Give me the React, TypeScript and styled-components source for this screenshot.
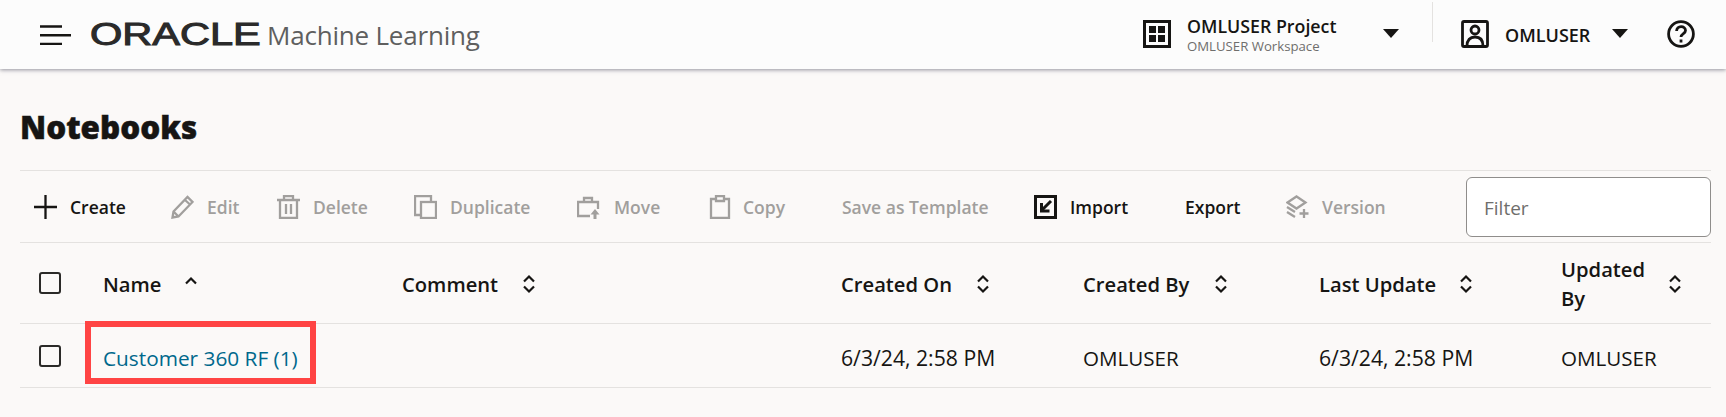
import React from 'react';
import styled, { createGlobalStyle } from 'styled-components';

const Global = createGlobalStyle`
  html, body { margin: 0; padding: 0; background: #fbf9f8; }
  body { font-family: "Open Sans", "Noto Sans", sans-serif; color: #161513; overflow: hidden; }
`;
const Page = styled.div`width: 1726px; height: 417px; display: flex; flex-direction: column;`;
const Header = styled.header`
  height: 69px; flex: none; display: flex; align-items: center; background: #fcfcfc;
  box-shadow: 0 1px 4px rgba(60, 60, 80, 0.55); padding: 0 31px 0 40px; box-sizing: border-box;
`;
const Burger = styled.svg`width: 31px; height: 20px; flex: none; margin-right: 19px;`;
const LogoBox = styled.div`width: 170px; height: 24px; flex: none; display: flex; align-items: center; margin-right: 7px; overflow: visible;`;
const LogoWord = styled.span`
  display: inline-block; font-family: "Liberation Sans", sans-serif; font-weight: 400; font-size: 31px; line-height: 24px;
  color: #2a2a2a; transform: scaleX(1.34); transform-origin: left center; -webkit-text-stroke: 1px #2a2a2a;
`;
const Product = styled.span`font-size: 26px; color: #5f5f5f; line-height: 34px; letter-spacing: -0.2px; white-space: nowrap;`;
const RightGroup = styled.div`margin-left: auto; display: flex; align-items: center; padding-bottom: 2px;`;
const Stack = styled.div`display: flex; flex-direction: column; margin: 3px 0 0 16px; width: 196px;`;
const ProjectTitle = styled.span`font-size: 17.8px; font-weight: 600; line-height: 22px; white-space: nowrap;`;
const ProjectSub = styled.span`font-size: 13.2px; color: #6f6e6c; line-height: 18px; white-space: nowrap;`;
const Divider = styled.div`width: 1px; height: 40px; background: #e4e2e0; margin: -24px 28px 0 33px;`;
const UserName = styled.span`font-size: 18px; font-weight: 600; margin: 2px 22px 0 16px; width: 85px; white-space: nowrap;`;
const Main = styled.main`padding: 40px 15px 0 20px; display: flex; flex-direction: column;`;
const Title = styled.h1`
  margin: 0 0 26px 0; font-size: 31.4px; font-weight: 800; line-height: 35px; color: #161513;
  -webkit-text-stroke: 0.5px #161513;
`;
const Toolbar = styled.div`
  height: 73px; display: flex; align-items: center; padding-left: 14px; box-sizing: border-box;
  border-top: 1px solid #e4e2e0; border-bottom: 1px solid #e4e2e0; position: relative;
`;
const ToolButton = styled.div<{ $w: number; $off?: boolean; $gap?: number }>`
  width: ${p => p.$w}px; flex: none; display: flex; align-items: center; gap: ${p => p.$gap ?? 13}px;
  color: ${p => (p.$off ? '#a19f9d' : '#161513')}; font-size: 17.5px; font-weight: 600; white-space: nowrap;
  svg { flex: none; }
`;
const Filter = styled.div`
  margin-left: auto; width: 245px; height: 60px; box-sizing: border-box; background: #fff;
  border: 1px solid #8f8d8b; border-radius: 6px; display: flex; align-items: center; padding: 2px 17px 0;
  font-size: 19px; color: #6f6e6c;
`;
const Row = styled.div<{ $h: number }>`
  height: ${p => p.$h}px; box-sizing: border-box; border-bottom: 1px solid #e4e2e0;
  display: grid; grid-template-columns: 83px 299px 439px 242px 236px 242px 150px; align-items: center;
`;
const CheckCell = styled.div`padding-left: 19px;`;
const Check = styled.div`width: 22px; height: 22px; box-sizing: border-box; border: 2px solid #2b2a28; border-radius: 3px;`;
const Head = styled.div`display: flex; align-items: center; font-size: 20.2px; font-weight: 600; line-height: 29px; padding-top: 2px;`;
const HeadLabel = styled.span<{ $w: number }>`width: ${p => p.$w}px; flex: none;`;
const Cell = styled.div<{ $date?: boolean }>`
  font-size: ${p => (p.$date ? 21.2 : 20.6)}px; line-height: 28px; padding-top: 4px; white-space: nowrap;
`;
const LinkCell = styled.div`position: relative; font-size: 20.8px; color: #00688c; line-height: 28px; padding-top: 4px; white-space: nowrap;`;
const Highlight = styled.div`
  position: absolute; left: -18px; top: -19px; width: 231px; height: 63px; box-sizing: border-box;
  border: 6px solid #ff4444; pointer-events: none;
`;

const SortBoth = () => (
  <svg width="14" height="20" viewBox="0 0 14 20" fill="none" stroke="#161513" strokeWidth="2.2">
    <path d="M2 7.5 7 2.5l5 5M2 12.5l5 5 5-5" />
  </svg>
);
const SortUp = () => (
  <svg width="14" height="20" viewBox="0 0 14 20" fill="none" stroke="#161513" strokeWidth="2.2">
    <path d="M2 9.5 7 4.5l5 5" />
  </svg>
);
const Caret = () => (
  <svg width="16" height="9" viewBox="0 0 16 9" fill="#161513"><path d="M0 0h16L8 9z" /></svg>
);
const ToolIcon: React.FC<{ children: React.ReactNode; off?: boolean }> = ({ children, off }) => (
  <svg width="23" height="24" viewBox="0 0 23 24" fill="none" stroke={off ? '#a19f9d' : '#161513'} strokeWidth="2.3">{children}</svg>
);

const HEADS: [string, number][] = [
  ['Comment', 120], ['Created On', 135], ['Created By', 131], ['Last Update', 140],
];

export default function App() {
  return (
    <Page>
      <Global />
      <Header>
        <Burger viewBox="0 0 31 20" fill="none" stroke="#161513" strokeWidth="2.4">
          <path d="M0 1.5h22M0 10.200h31M0 19h22" />
        </Burger>
        <LogoBox><LogoWord>ORACLE</LogoWord></LogoBox>
        <Product>Machine Learning</Product>
        <RightGroup>
          <svg width="28" height="28" viewBox="0 0 28 28" fill="none">
            <rect x="1.5" y="1.5" width="25" height="25" stroke="#161513" strokeWidth="3" />
            <path fill="#161513" d="M6 6h7v7H6zM15 6h7v7h-7zM6 15h7v7H6zM15 15h7v7h-7z" />
          </svg>
          <Stack>
            <ProjectTitle>OMLUSER Project</ProjectTitle>
            <ProjectSub>OMLUSER Workspace</ProjectSub>
          </Stack>
          <Caret />
          <Divider />
          <svg width="28" height="28" viewBox="0 0 28 28" fill="none" stroke="#161513" strokeWidth="2.8">
            <rect x="1.5" y="1.5" width="25" height="25" rx="1.5" />
            <circle cx="14" cy="10" r="4" />
            <path d="M6 26c0-6 3-9 8-9s8 3 8 9" />
          </svg>
          <UserName>OMLUSER</UserName>
          <Caret />
          <svg style={{ marginLeft: 39 }} width="28" height="28" viewBox="0 0 28 28" fill="none" stroke="#161513" strokeWidth="2.8">
            <circle cx="14" cy="14" r="12.4" />
            <path d="M9.600 11c0-2.700 2-4.400 4.500-4.400s4.400 1.600 4.400 3.900c0 3.400-4.500 3.500-4.500 6.500" />
            <path d="M14 19.500v3" />
          </svg>
        </RightGroup>
      </Header>
      <Main>
        <Title>Notebooks</Title>
        <Toolbar>
          <ToolButton $w={137}>
            <ToolIcon><path d="M11.500 0v24M0 12h23" /></ToolIcon>Create
          </ToolButton>
          <ToolButton $w={106} $off>
            <ToolIcon off><path d="M1.500 22.500l1-6L16.500 2l5 5-14 14.500zM2.500 16.500l5 5M14 5l5 4.500" /></ToolIcon>Edit
          </ToolButton>
          <ToolButton $w={137} $off>
            <ToolIcon off><path d="M0 5h23M7 5V1h9v4M3 5v18h17V5M9 9v10M14 9v10" /></ToolIcon>Delete
          </ToolButton>
          <ToolButton $w={163} $off>
            <ToolIcon off><path d="M6 20H1V1h16v5" /><rect x="7" y="7" width="15" height="16" /></ToolIcon>Duplicate
          </ToolButton>
          <ToolButton $w={132} $off $gap={14}>
            <ToolIcon off><path d="M13 21H1V7h20v7M7 7V3h8v4" /><path d="M18 24v-7" strokeWidth="3" /><path fill="#a19f9d" stroke="none" d="M13.500 19.500 18 14l4.500 5.500z" /></ToolIcon>Move
          </ToolButton>
          <ToolButton $w={133} $off $gap={11}>
            <ToolIcon off><path d="M7 4H2v19h18V4h-5M7 1h8v5H7z" /></ToolIcon>Copy
          </ToolButton>
          <ToolButton $w={192} $off>Save as Template</ToolButton>
          <ToolButton $w={151}>
            <ToolIcon><rect x="1.500" y="1.500" width="20" height="21" strokeWidth="3" /><path d="M17 6 8 15" strokeWidth="3" /><path d="M7.500 8v8h8" strokeWidth="3" /></ToolIcon>Import
          </ToolButton>
          <ToolButton $w={101}>Export</ToolButton>
          <ToolButton $w={98} $off>
            <ToolIcon off><path d="M1.500 7.500l9-6 9 6-9 6zM1 12l8 5M1 17l8 5M18 14v9M13.500 18.500h9" /></ToolIcon>Version
          </ToolButton>
          <Filter>Filter</Filter>
        </Toolbar>
        <Row $h={81}>
          <CheckCell><Check /></CheckCell>
          <Head><HeadLabel $w={81}>Name</HeadLabel><SortUp /></Head>
          {HEADS.map(([label, w]) => (
            <Head key={label}><HeadLabel $w={w}>{label}</HeadLabel><SortBoth /></Head>
          ))}
          <Head><HeadLabel $w={107}>Updated By</HeadLabel><SortBoth /></Head>
        </Row>
        <Row $h={64}>
          <CheckCell><Check /></CheckCell>
          <LinkCell>Customer 360 RF (1)<Highlight /></LinkCell>
          <span />
          <Cell $date>6/3/24, 2:58 PM</Cell>
          <Cell>OMLUSER</Cell>
          <Cell $date>6/3/24, 2:58 PM</Cell>
          <Cell>OMLUSER</Cell>
        </Row>
      </Main>
    </Page>
  );
}
